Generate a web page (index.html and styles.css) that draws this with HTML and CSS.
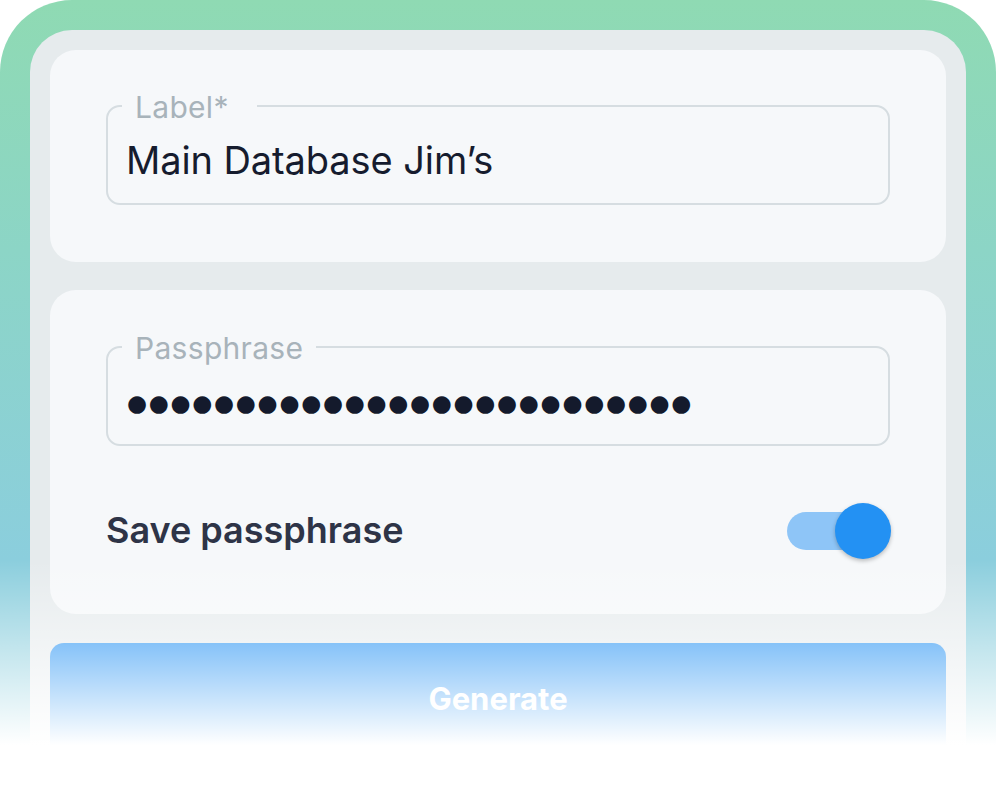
FILE: index.html
```html
<!DOCTYPE html>
<html lang="en">
<head>
<meta charset="utf-8">
<title>Generate</title>
<link rel="stylesheet" href="styles.css">
</head>
<body>
<div class="frame">
  <div class="panel">
    <section class="card card-label">
      <div class="field">
        <span class="field-label label-first">Label*</span>
        <div class="field-value">Main Database Jim’s</div>
      </div>
    </section>
    <section class="card card-pass">
      <div class="field">
        <span class="field-label">Passphrase</span>
        <div class="field-dots">●●●●●●●●●●●●●●●●●●●●●●●●●●</div>
      </div>
      <div class="save-row">
        <span class="save-text">Save passphrase</span>
        <div class="toggle"><span class="track"></span><span class="knob"></span></div>
      </div>
    </section>
    <button class="generate">Generate</button>
  </div>
  <div class="fade"></div>
</div>
</body>
</html>
```
FILE: styles.css
```css
* { box-sizing: border-box; }
html, body { margin: 0; padding: 0; background: #ffffff; overflow: hidden; }
body { width: 996px; height: 786px; font-family: "Inter", "Lato", sans-serif; }

.frame {
  position: relative;
  height: 786px;
  padding: 30px 30px 0;
  border-radius: 72px 72px 0 0;
  background: linear-gradient(to bottom, #8fdab3 0px, #8cd5c6 250px, #8bcedd 560px, #8bcedd 786px);
}

.panel {
  height: 100%;
  background: #e6ebed;
  border-radius: 42px 42px 0 0;
  padding: 20px 20px 0;
  display: flex;
  flex-direction: column;
  gap: 28px;
}

.card {
  background: #f6f8fa;
  border-radius: 26px;
  padding: 0 56px;
}
.card-label { height: 212px; padding-top: 55px; }
.card-pass { height: 324px; padding-top: 56px; }

.field {
  position: relative;
  height: 100px;
  border: 2px solid #d6dde1;
  border-radius: 14px;
  padding: 0 18px;
  display: flex;
  align-items: center;
}
.field-label {
  position: absolute;
  top: -18px;
  left: 14px;
  padding: 0 13px 0 13px;
  background: #f6f8fa;
  color: #a8b3ba;
  font-size: 30px;
  line-height: 36px;
  letter-spacing: 0.3px;
}
.label-first { padding-right: 28px; }
.field-value {
  color: #161c2e;
  font-size: 38px;
  line-height: 44px;
  margin-top: 10px;
  letter-spacing: -0.1px;
}
.field-dots {
  color: #141a2c;
  font-family: "DejaVu Sans", sans-serif;
  font-size: 23px;
  letter-spacing: 1.7px;
  line-height: 30px;
  margin-top: 14px;
  margin-left: 1px;
}

.save-row {
  margin-top: 57px;
  height: 56px;
  display: flex;
  align-items: center;
  justify-content: space-between;
}
.save-text {
  color: #2e3447;
  font-size: 36px;
  font-weight: 600;
  margin-top: -2px;
}
.toggle {
  position: relative;
  width: 104px;
  height: 56px;
  display: flex;
  align-items: center;
  margin-right: -1px;
}
.track {
  width: 88px;
  height: 38px;
  border-radius: 19px;
  background: #8ec5f7;
}
.knob {
  position: absolute;
  right: 0;
  top: 0;
  width: 56px;
  height: 56px;
  border-radius: 50%;
  background: #2391f3;
  box-shadow: 0 2px 4px rgba(0, 0, 0, 0.25);
}

.generate {
  flex: 0 0 120px;
  margin-top: 1px;
  border: 0;
  border-radius: 14px;
  background: #2391f3;
  color: #ffffff;
  font-family: "Inter", "Lato", sans-serif;
  font-size: 31px;
  font-weight: 700;
  padding: 0 0 10px;
}

.fade {
  position: absolute;
  inset: 0;
  pointer-events: none;
  background: linear-gradient(to bottom, rgba(255,255,255,0) 0px, rgba(255,255,255,0) 560px, #ffffff 745px, #ffffff 786px);
}
```
